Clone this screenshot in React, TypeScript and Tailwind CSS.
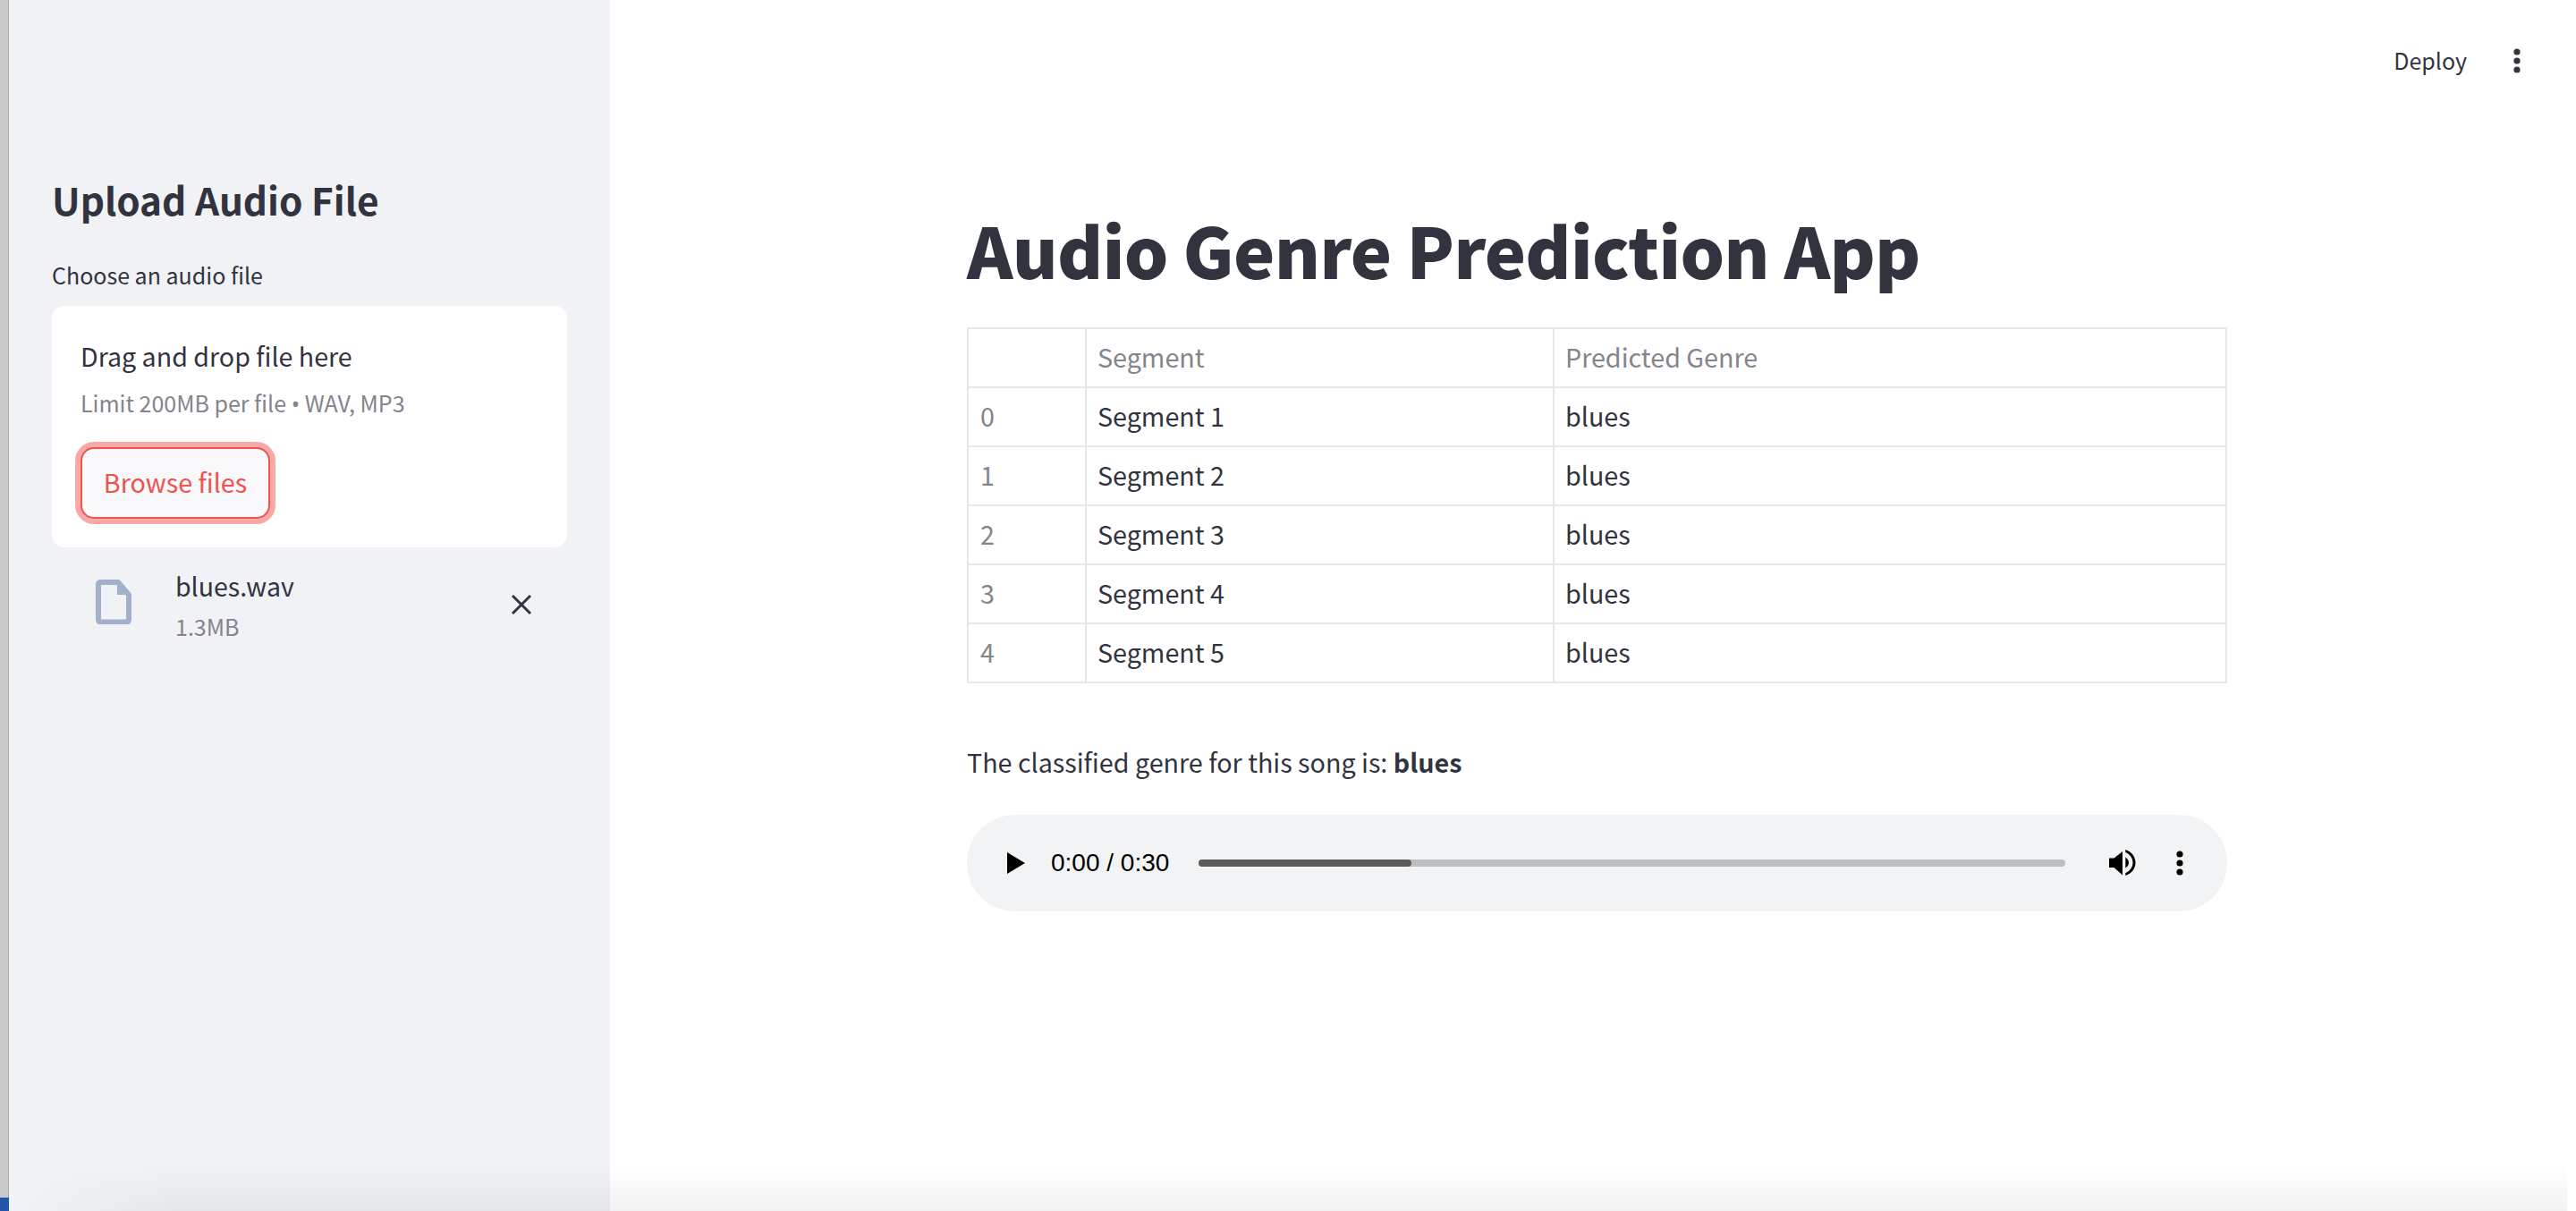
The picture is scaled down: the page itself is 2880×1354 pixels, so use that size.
const font = "font-['Noto_Sans_CJK_SC','Noto_Sans',sans-serif]";

const rows = [
  ['0', 'Segment 1', 'blues'],
  ['1', 'Segment 2', 'blues'],
  ['2', 'Segment 3', 'blues'],
  ['3', 'Segment 4', 'blues'],
  ['4', 'Segment 5', 'blues'],
];

function Dots({ className }: { className: string }) {
  return (
    <svg width="12" height="32" viewBox="0 0 12 32" className={className}>
      <circle cx="6" cy="6" r="3.6" />
      <circle cx="6" cy="16" r="3.6" />
      <circle cx="6" cy="26" r="3.6" />
    </svg>
  );
}

function Sidebar() {
  return (
    <aside className="flex w-[672px] shrink-0 flex-col bg-[#f0f2f6] pl-[48px] pr-[48px] pt-[198px] text-[#31333f]">
      <h2 className="h-[50px] text-[42.3px] font-bold leading-[50px]">Upload Audio File</h2>
      <div className="mt-[46px] h-[26px] text-[25px] leading-[26px]">Choose an audio file</div>
      <div className="mt-[22px] flex h-[270px] flex-col rounded-[14px] bg-white pl-[32px] pt-[40px]">
        <div className="h-[32px] text-[28.6px] leading-[32px]">Drag and drop file here</div>
        <div className="mt-[22px] h-[28px] text-[25px] leading-[28px] text-[#83848c]">
          Limit 200MB per file <span className="font-['Noto_Sans',sans-serif]">•</span> WAV, MP3
        </div>
        <button className="mt-[36px] flex h-[80px] w-[212px] items-center justify-center rounded-[15px] border-2 border-[#f0524e] bg-[#f9f9fb] pb-[3px] text-[28.7px] text-[#f0524e] shadow-[0_0_0_6px_#f9aaa8]">
          Browse files
        </button>
      </div>
      <div className="relative mt-[24px] flex h-[100px]">
        <svg width="40" height="50" viewBox="0 0 40 50" className="ml-[49px] mt-[12px]">
          <path d="M5 3h20l12 14v28a2.5 2.5 0 0 1-2.5 2.5h-29A2.5 2.5 0 0 1 3 45V5.5A2.5 2.5 0 0 1 5 3z" fill="none" stroke="#a3b0cc" strokeWidth="6" strokeLinejoin="round" />
          <path d="M24 3l13 14H24z" fill="#a3b0cc" />
        </svg>
        <div className="ml-[49px] flex w-[375px] flex-col">
          <div className="h-[44px] text-[28.5px] leading-[38px]">blues.wav</div>
          <div className="mt-[2px] h-[40px] text-[25px] leading-[36px] text-[#83848c]">1.3MB</div>
        </div>
        <svg width="24" height="24" viewBox="0 0 24 24" className="mt-[28px]" stroke="#31333f" strokeWidth="3" fill="none">
          <path d="M2 2l20 20M22 2L2 22" />
        </svg>
      </div>
    </aside>
  );
}

function AudioPlayer() {
  return (
    <div className="mt-[39px] flex h-[108px] items-center rounded-full bg-[#f1f3f4] pl-[45px] pr-[46px] font-['Liberation_Sans',sans-serif]">
      <svg width="20" height="24" viewBox="0 0 20 24">
        <path d="M0 0l20 12L0 24z" fill="#000" />
      </svg>
      <span className="ml-[29px] text-[28px] leading-none text-black">0:00 / 0:30</span>
      <div className="ml-[33px] h-[8px] w-[969px] rounded-full bg-[#bdbebf]">
        <div className="h-full w-[238px] rounded-full bg-[#5b5b5b]" />
      </div>
      <svg width="30" height="30" viewBox="0 0 30 30" className="ml-[49px]">
        <path d="M0 9.5h5.5L15 2v26.5L5.5 20H0z" fill="#000" />
        <path d="M18.3 8.5C20.5 10 22 12 22 14.5C22 17 20.5 19 18.3 20.5z" fill="#000" />
        <path d="M18.3 0C25 2 29.5 8 29.5 14.5C29.5 21 25 27 18.3 29V26C23 24 26.5 20 26.5 14.5C26.5 9 23 5 18.3 3z" fill="#000" />
      </svg>
      <Dots className="ml-[43px] fill-black" />
    </div>
  );
}

export default function App() {
  return (
    <div className={`relative flex h-[1354px] w-[2880px] overflow-hidden bg-white ${font}`}>
      <div className="flex w-[10px] shrink-0 flex-col bg-[#c9c9c9]">
        <div className="flex-1 border-r border-[#a8a8a8]" />
        <div className="h-[15px] bg-[#2355a7]" />
      </div>
      <Sidebar />
      <main className="relative flex-1 text-[#31333f]">
        <header className="flex h-[232px] items-start justify-end pr-[60px] pt-[52px]">
          <span className="text-[25px] leading-[30px]">Deploy</span>
          <Dots className="ml-[50px] mt-[0px] fill-[#31333f]" />
        </header>
        <div className="ml-[399px] w-[1409px]">
          <h1 className="h-[96px] text-[78px] font-black leading-[92px] tracking-[-0.8px]">Audio Genre Prediction App</h1>
          <table className="mt-[38px] w-full table-fixed border-collapse text-[28.7px]">
            <colgroup>
              <col className="w-[132px]" />
              <col className="w-[523px]" />
              <col />
            </colgroup>
            <thead>
              <tr className="h-[66px] text-[#83848c]">
                <th className="border-2 border-[#e6e7ea] font-normal" />
                <th className="border-2 border-[#e6e7ea] px-[12px] pb-[2px] text-left font-normal">Segment</th>
                <th className="border-2 border-[#e6e7ea] px-[12px] pb-[2px] text-left font-normal">Predicted Genre</th>
              </tr>
            </thead>
            <tbody>
              {rows.map((row) => (
                <tr key={row[0]} className="h-[66px]">
                  <td className="border-2 border-[#e6e7ea] px-[13px] pb-[2px] text-[#83848c]">{row[0]}</td>
                  <td className="border-2 border-[#e6e7ea] px-[12px] pb-[2px]">{row[1]}</td>
                  <td className="border-2 border-[#e6e7ea] px-[12px] pb-[2px]">{row[2]}</td>
                </tr>
              ))}
            </tbody>
          </table>
          <p className="mt-[68px] h-[40px] text-[28.7px] leading-[40px]">
            The classified genre for this song is: <strong className="font-bold">blues</strong>
          </p>
          <AudioPlayer />
        </div>
      </main>
      <div className="pointer-events-none absolute inset-x-[10px] bottom-0 h-[54px] bg-gradient-to-b from-transparent to-[rgba(0,0,0,0.05)] [mask-image:linear-gradient(to_right,transparent,black_200px)]" />
    </div>
  );
}
